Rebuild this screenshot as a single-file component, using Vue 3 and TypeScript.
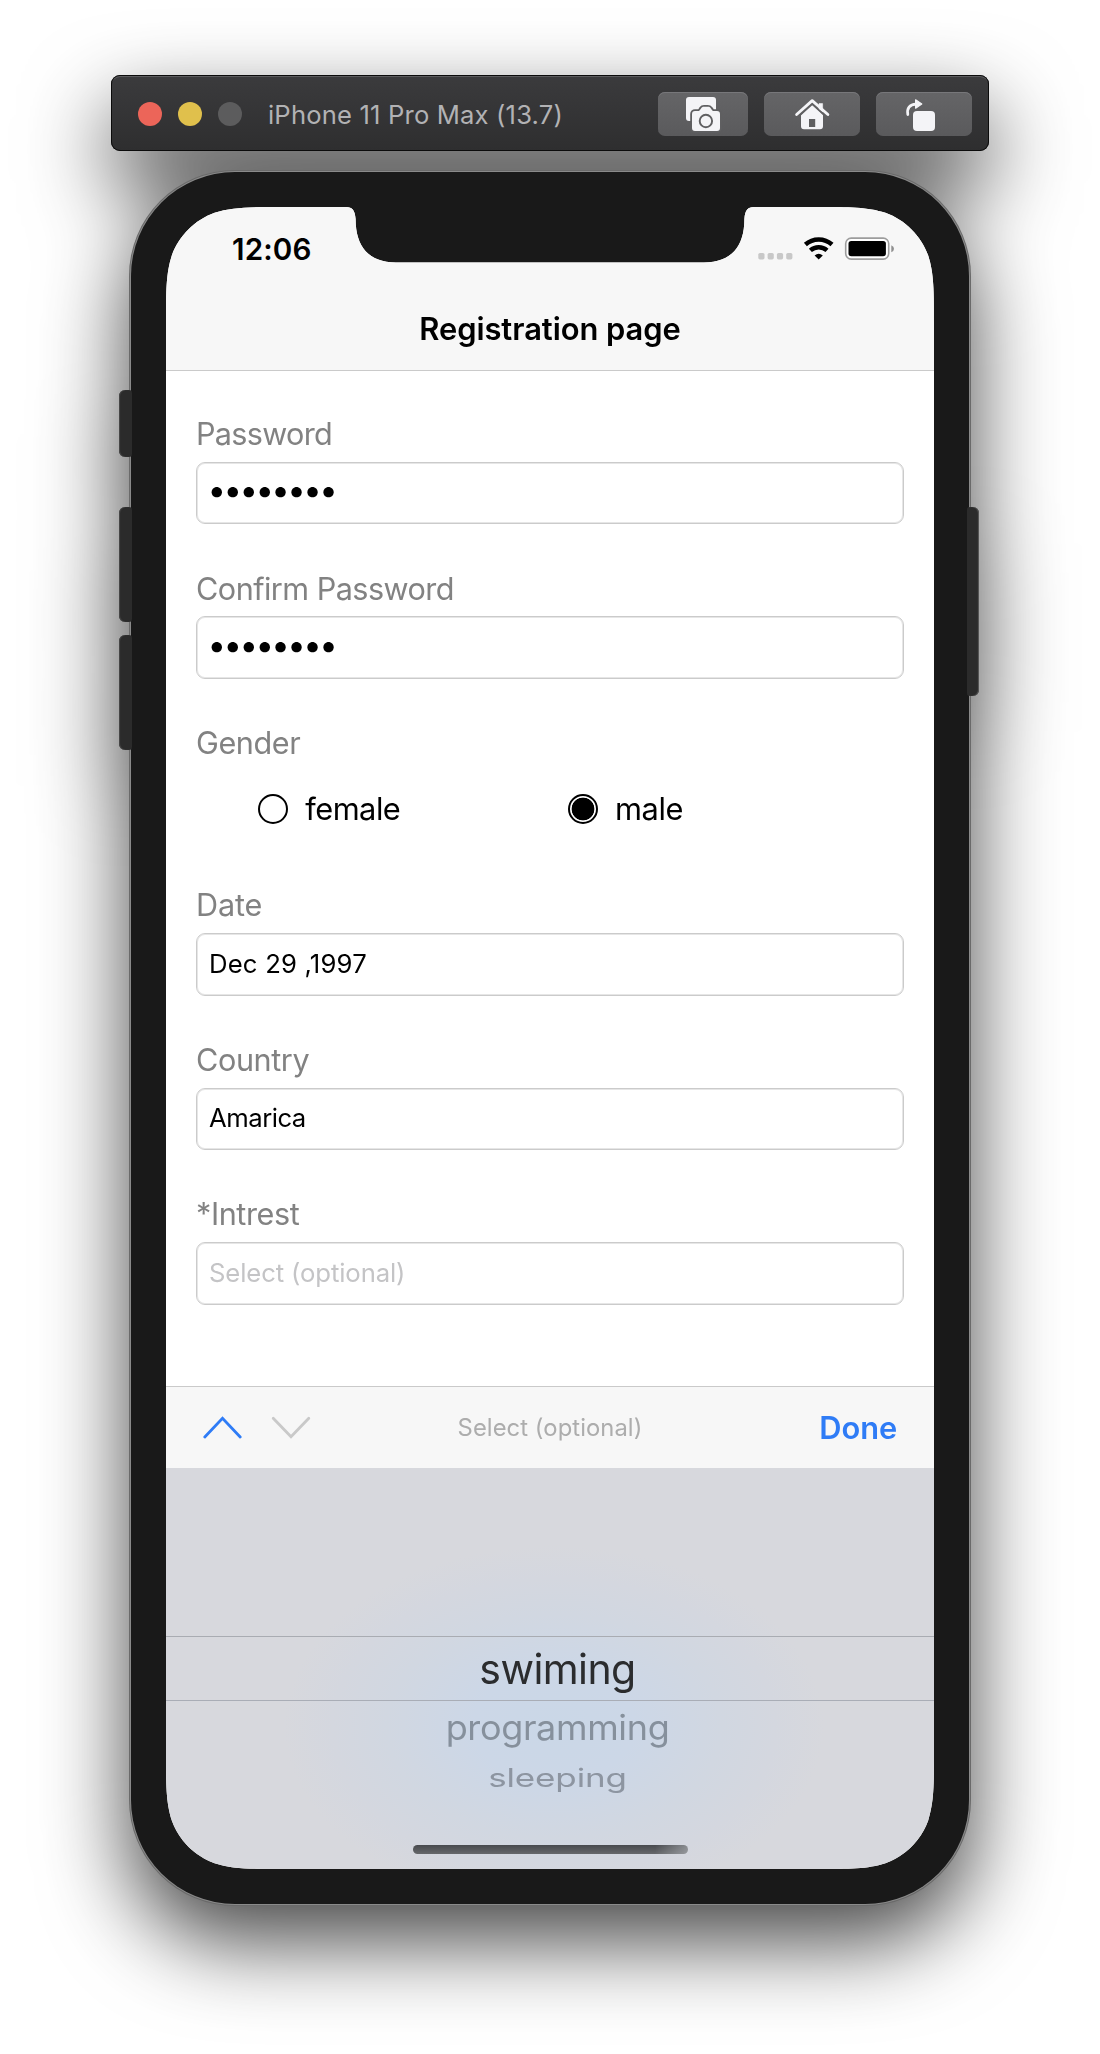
<script setup lang="ts">
import { ref } from 'vue'

interface Field {
  label: string
  kind: 'password' | 'text' | 'radio'
  value?: string
  placeholder?: string
  spacing: string
  labelSpacing: string
}

interface Option {
  value: string
  spacing: string
}

const fields: Field[] = [
  { label: 'Password', kind: 'password', value: '••••••••', spacing: '-2.6px', labelSpacing: '-0.7px' },
  { label: 'Confirm Password', kind: 'password', value: '••••••••', spacing: '-2.6px', labelSpacing: '-0.53px' },
  { label: 'Gender', kind: 'radio', spacing: '0', labelSpacing: '-0.4px' },
  { label: 'Date', kind: 'text', value: 'Dec 29 ,1997', spacing: '0.18px', labelSpacing: '-0.17px' },
  { label: 'Country', kind: 'text', value: 'Amarica', spacing: '-0.5px', labelSpacing: '-0.4px' },
  { label: '*Intrest', kind: 'text', placeholder: 'Select (optional)', spacing: '-0.12px', labelSpacing: '-0.42px' },
]

const genders: Option[] = [
  { value: 'female', spacing: '-0.5px' },
  { value: 'male', spacing: '-0.34px' },
]

const gender = ref('male')
const hobbies = ['swiming', 'programming', 'sleeping']
</script>

<template>
  <div class="stage">
    <div class="simulator">
      <header class="toolbar">
        <div class="lights">
          <span class="light close"></span>
          <span class="light minimise"></span>
          <span class="light zoom"></span>
        </div>
        <span class="device-name">iPhone 11 Pro Max (13.7)</span>
        <div class="actions">
          <button class="action narrow" aria-label="Screenshot">
            <svg width="90" height="44" viewBox="0 0 90 44">
              <path d="M31 5H55a3 3 0 0 1 3 3V26a3 3 0 0 1-3 3H31a3 3 0 0 1-3-3V8a3 3 0 0 1 3-3Z" fill="#f4f4f7" />
              <path
                d="M37 19H40.2C41.5 19 42 17.800 43 16.400C44 15 45 14.800 46 14.800H49.800C51 14.800 52 15.200 52.900 16.400C53.900 17.800 54.400 19 55.800 19H59A3 3 0 0 1 62 22V36A3 3 0 0 1 59 39H37A3 3 0 0 1 34 36V22A3 3 0 0 1 37 19Z"
                fill="#f4f4f7" stroke="#5f5f61" stroke-width="3.6" paint-order="stroke"
              />
              <circle cx="47.900" cy="29" r="6.200" fill="none" stroke="#5f5f61" stroke-width="1.900" />
            </svg>
          </button>
          <button class="action" aria-label="Home">
            <svg width="96" height="44" viewBox="0 0 96 44">
              <path d="M48.200 12.200L59 22.800V34.300A3 3 0 0 1 56 37.300H40A3 3 0 0 1 37 34.300V22.800Z" fill="#f4f4f7" />
              <path d="M55 17V11.600H58.600V20Z" fill="#f4f4f7" stroke="#f4f4f7" stroke-width="0.600" />
              <path d="M36 23.200L48.200 12.100L60.400 23.200" fill="none" stroke="#5f5f61" stroke-width="1.700" />
              <path d="M32.600 22.500L48.200 8.600L63.900 22.500" fill="none" stroke="#f4f4f7" stroke-width="2.800" stroke-linecap="round" stroke-linejoin="round" />
              <rect x="45" y="27" width="6.200" height="8" fill="#5f5f61" />
            </svg>
          </button>
          <button class="action" aria-label="Rotate">
            <svg width="96" height="44" viewBox="0 0 96 44">
              <rect x="37" y="19" width="22" height="20" rx="4" fill="#f4f4f7" />
              <path d="M31.800 22.600C30.600 16.400 33.600 12.200 40 12.100" fill="none" stroke="#f4f4f7" stroke-width="2.700" stroke-linecap="round" />
              <path d="M39.600 7.800L45.800 12L39.600 16.200Z" fill="#f4f4f7" stroke="#f4f4f7" stroke-width="1.200" stroke-linejoin="round" />
            </svg>
          </button>
        </div>
      </header>

      <div class="phone">
        <i class="side mute"></i>
        <i class="side volume-up"></i>
        <i class="side volume-down"></i>
        <i class="side power"></i>

        <main class="screen">
          <div class="top">
            <div class="status">
              <span class="clock">12:06</span>
              <svg width="136" height="24" viewBox="0 0 136 24">
                <g fill="#c8c8c8">
                  <rect x="0.300" y="16" width="6.200" height="6.400" rx="1.600" />
                  <rect x="9.600" y="16" width="6.200" height="6.400" rx="1.600" />
                  <rect x="18.900" y="16" width="6.200" height="6.400" rx="1.600" />
                  <rect x="28.200" y="16" width="6.200" height="6.400" rx="1.600" />
                </g>
                <g fill="none" stroke="#000" stroke-width="4.500">
                  <path d="M47.400 7.500A19.900 19.900 0 0 1 74 7.500" />
                  <path d="M52.400 13.400A12.400 12.400 0 0 1 69 13.400" />
                </g>
                <path d="M56.600 18.400A6.500 6.500 0 0 1 64.800 18.400L60.700 22.600Z" />
                <rect x="87.700" y="1.100" width="43" height="21" rx="5.500" fill="#fff" stroke="#9d9d9d" stroke-width="1.600" />
                <rect x="90.500" y="3.900" width="37.400" height="15.400" rx="2.800" />
                <path d="M133.300 8.200Q136 9.200 136 11.700T133.300 15.200Z" fill="#8f8f8f" />
              </svg>
            </div>
            <h1 class="title">Registration page</h1>
          </div>

          <form class="form" @submit.prevent>
            <div v-for="field in fields" :key="field.label" class="field">
              <span class="label" :style="{ letterSpacing: field.labelSpacing }">{{ field.label }}</span>
              <div v-if="field.kind === 'radio'" class="radios">
                <span v-for="g in genders" :key="g.value" class="radio" @click="gender = g.value">
                  <i class="ring" :class="{ on: gender === g.value }"></i>
                  <span :style="{ letterSpacing: g.spacing }">{{ g.value }}</span>
                </span>
              </div>
              <div v-else class="input" :class="field.kind" :style="{ letterSpacing: field.spacing }">
                <span v-if="field.value">{{ field.value }}</span>
                <span v-else class="placeholder">{{ field.placeholder }}</span>
              </div>
            </div>
          </form>

          <div class="accessory">
            <svg width="110" height="24" viewBox="0 0 110 24" fill="none" stroke-width="2.800" stroke-linecap="round">
              <path d="M1.800 21L19.500 2.400L37.200 21" stroke="#2f7cf6" />
              <path d="M70.200 2.200L88 20.800L105.800 2.200" stroke="#c9c9c9" />
            </svg>
            <span class="hint">Select (optional)</span>
            <span class="done">Done</span>
          </div>

          <div class="picker">
            <div v-for="hobby in hobbies" :key="hobby" class="option" :class="hobby">
              <span>{{ hobby }}</span>
            </div>
            <div class="home-indicator"></div>
          </div>
        </main>
      </div>
    </div>
  </div>
</template>

<style>
body {
  background: #fff;
}
</style>

<style scoped>
.stage {
  width: 1100px;
  height: 2054px;
  overflow: hidden;
  box-sizing: border-box;
  padding-top: 75px;
  font-family: Inter, "Liberation Sans", sans-serif;
  color: #000;
}

.simulator {
  display: flex;
  flex-direction: column;
  align-items: center;
  gap: 21px;
  filter: drop-shadow(0 36px 43px rgba(0, 0, 0, 0.72));
}

.toolbar {
  box-sizing: border-box;
  width: 878px;
  height: 76px;
  padding: 1px 17px 0 27px;
  display: flex;
  align-items: center;
  background: linear-gradient(#3b3b3d, #2e2e2f);
  border-radius: 9px;
  box-shadow: inset 0 0 0 1px #0b0b0b, inset 0 2px 0 0 #5c5c5e;
}

.lights {
  display: flex;
  gap: 16px;
}

.light {
  width: 24px;
  height: 24px;
  border-radius: 50%;
}

.close {
  background: #ec6559;
}

.minimise {
  background: #e0c04c;
}

.zoom {
  background: #5c5c5d;
}

.device-name {
  margin-left: 26px;
  padding-top: 2px;
  font-size: 25.6px;
  letter-spacing: 0.17px;
  color: #b2b2b4;
  white-space: nowrap;
}

.actions {
  margin-left: auto;
  display: flex;
  gap: 16px;
}

.action {
  width: 96px;
  height: 44px;
  padding: 0;
  border: 0;
  border-radius: 7px;
  background: linear-gradient(#656567, #5a5a5c);
  box-shadow: inset 0 1px 0 #77777a;
}

.action.narrow {
  width: 90px;
}

.action svg {
  display: block;
}

.phone {
  position: relative;
  box-sizing: border-box;
  width: 838px;
  height: 1732px;
  padding: 35px 35px 35px;
  border-radius: 104px;
  background: #191919;
  box-shadow: 0 0 0 1px #8a8a8a, 0 0 0 2px #6a6a6a;
}

.side {
  position: absolute;
  left: -12px;
  width: 13px;
  background: #2b2b2b;
  border-radius: 6px 3px 3px 6px;
  box-shadow: inset 1px 0 1px #4a4a4a;
}

.mute {
  top: 218px;
  height: 67px;
}

.volume-up {
  top: 335px;
  height: 115px;
}

.volume-down {
  top: 463px;
  height: 115px;
}

.power {
  left: auto;
  right: -10px;
  top: 335px;
  height: 189px;
  width: 12px;
  border-radius: 3px 6px 6px 3px;
  box-shadow: inset -1px 0 1px #5a5a5a;
}

.screen {
  width: 768px;
  height: 1662px;
  display: flex;
  flex-direction: column;
  background: #fff;
  clip-path: path("M117.700 0H180C186.500 0 189 3.500 189.600 12C189.600 40 203 55.400 230 55.400H538C565 55.400 578.400 40 578.400 12C579 3.500 581.500 0 588 0H650.300C684.200 0 701.100 0 719.400 5.800C739.300 13 755 28.700 762.200 48.600C768 66.900 768 83.800 768 117.700V1544.300C768 1578.200 768 1595.100 762.200 1613.400C755 1633.300 739.300 1649 719.400 1656.200C701.100 1662 684.200 1662 650.300 1662H117.700C83.800 1662 66.900 1662 48.600 1656.200C28.700 1649 13 1633.300 5.800 1613.400C0 1595.100 0 1578.200 0 1544.300V117.700C0 83.800 0 66.900 5.800 48.600C13 28.700 28.700 13 48.600 5.800C66.900 0 83.800 0 117.700 0Z");
}

.top {
  box-sizing: border-box;
  height: 164px;
  background: #f7f7f7;
  border-bottom: 1px solid #cacaca;
}

.status {
  box-sizing: border-box;
  height: 84.6px;
  padding: 0 40px 0 66px;
  display: flex;
  align-items: center;
  justify-content: space-between;
}

.clock {
  padding-bottom: 1px;
  font-size: 29.6px;
  font-weight: 600;
  letter-spacing: 0.15px;
}

.title {
  margin: 0;
  height: 74px;
  display: flex;
  align-items: center;
  justify-content: center;
  font-size: 30.9px;
  font-weight: 600;
  letter-spacing: -0.05px;
}

.form {
  box-sizing: border-box;
  height: 1015px;
  padding: 42.900px 30px 0;
  display: flex;
  flex-direction: column;
  gap: 44.100px;
}

.field {
  display: flex;
  flex-direction: column;
}

.label {
  height: 40px;
  line-height: 40px;
  font-size: 30.6px;
  color: #828282;
}

.input {
  box-sizing: border-box;
  margin-top: 7.800px;
  height: 62.800px;
  padding: 0 10px 2.200px 12px;
  display: flex;
  align-items: center;
  border: 1px solid #cbcbcb;
  box-shadow: inset 0 0 0 1px #e6e6e6;
  border-radius: 9px;
  font-size: 25.7px;
  white-space: nowrap;
}

.input.password {
  padding: 0 10px 6px 10.500px;
  font-size: 33px;
}

.placeholder {
  color: #c4c4c6;
}

.radios {
  margin-top: 13.900px;
  height: 63.800px;
  display: flex;
}

.radio {
  box-sizing: border-box;
  width: 309.700px;
  padding-left: 62px;
  display: flex;
  align-items: center;
  gap: 17.200px;
  font-size: 30.8px;
}

.radio > span {
  padding-bottom: 1px;
}

.ring {
  box-sizing: border-box;
  width: 30px;
  height: 30px;
  border: 2px solid #000;
  border-radius: 50%;
  background: #fff;
}

.ring.on {
  background: radial-gradient(circle, #000 11px, #fff 11.700px);
}

.accessory {
  box-sizing: border-box;
  height: 82px;
  padding: 0 37px;
  display: grid;
  grid-template-columns: 1fr auto 1fr;
  align-items: center;
  background: #f7f7f7;
  border-top: 1px solid #cacaca;
}

.hint {
  font-size: 23.8px;
  letter-spacing: 0.06px;
  color: #adadad;
}

.done {
  justify-self: end;
  font-size: 30.8px;
  font-weight: 600;
  letter-spacing: -0.1px;
  color: #2f7cf6;
}

.picker {
  box-sizing: border-box;
  height: 401px;
  padding: 168px 0 14.600px;
  display: flex;
  flex-direction: column;
  align-items: center;
  background: radial-gradient(ellipse 270px 180px at 388px 258px, #cad7e7 0%, #ccd7e7 30%, #d1d7e1 62%, #d4d7df 82%, #d7d8dd 100%) #d7d8dd;
}

.option {
  box-sizing: border-box;
  width: 100%;
  padding-left: 15px;
  display: flex;
  align-items: center;
  justify-content: center;
}

.swiming {
  height: 65.200px;
  border-top: 1px solid #a9acb2;
  border-bottom: 1px solid #a9adb6;
  font-size: 41px;
  letter-spacing: -0.58px;
  color: #2b2c2e;
}

.programming {
  height: 51.200px;
  font-size: 36px;
  letter-spacing: -0.35px;
  color: #86909c;
}

.programming span {
  transform: scaleY(0.97);
}

.sleeping {
  height: 50px;
  font-size: 35px;
  letter-spacing: -0.15px;
  color: #8d95a1;
}

.sleeping span {
  transform: scaleY(0.74);
}

.home-indicator {
  margin-top: auto;
  width: 275px;
  height: 9.400px;
  border-radius: 5px;
  background: linear-gradient(90deg, transparent 88%, rgba(200, 203, 208, 0.5)), linear-gradient(#484a4e, #66686b);
}
</style>
